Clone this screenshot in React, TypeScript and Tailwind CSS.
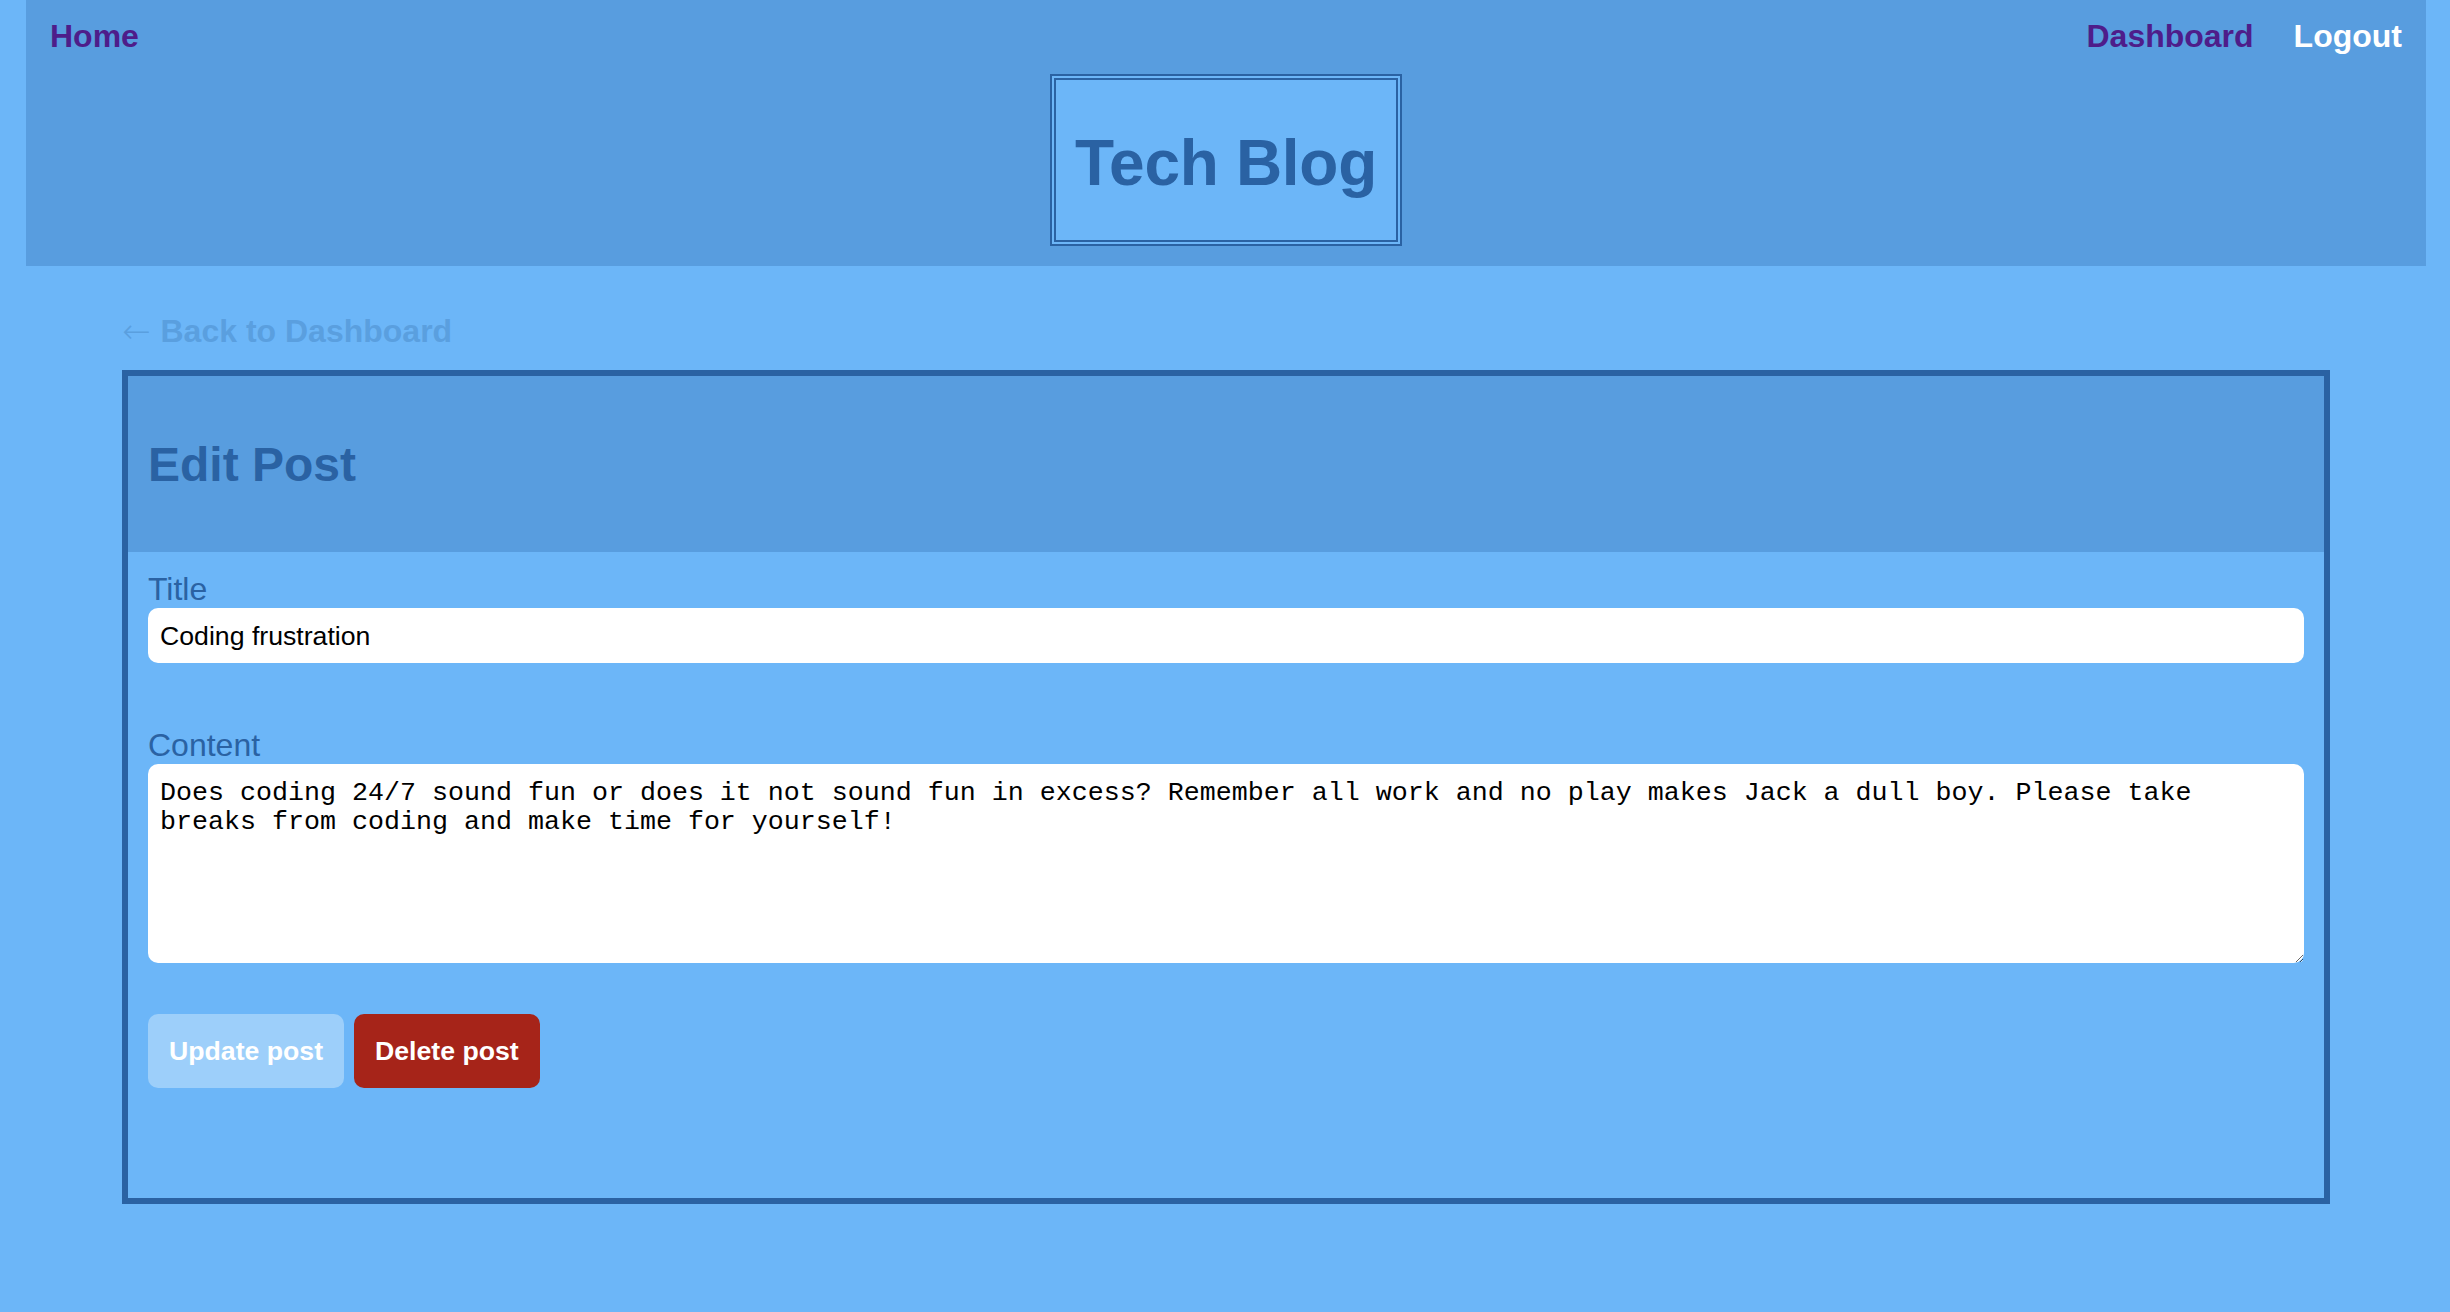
import { useState } from "react";

export default function App() {
  const [title, setTitle] = useState("Coding frustration");
  const [content, setContent] = useState(
    "Does coding 24/7 sound fun or does it not sound fun in excess? Remember all work and no play makes Jack a dull boy. Please take breaks from coding and make time for yourself!"
  );

  return (
    <div className="min-h-screen bg-[#6cb6f8] font-['Liberation_Sans',Arial,sans-serif]">
      <header className="ml-[26px] mr-[24px] bg-[#589ddf] px-[24px] pt-[18px] pb-[20px]">
        <nav className="flex items-center justify-between text-[32px] leading-[37px] font-bold">
          <a href="#" className="text-[#4e1d8a]">
            Home
          </a>
          <div className="flex items-center gap-[40px]">
            <a href="#" className="text-[#4e1d8a]">
              Dashboard
            </a>
            <a href="#" className="text-white">
              Logout
            </a>
          </div>
        </nav>
        <div className="mt-[19px] flex justify-center">
          <h1 className="border-[6px] border-double border-[#2a62a3] bg-[#6cb6f8] px-[19px] pt-[47px] pb-[40px] text-[64px] leading-[73px] font-bold tracking-[-0.3px] text-[#2a62a3]">
            Tech Blog
          </h1>
        </div>
      </header>

      <main className="pl-[122px] pr-[120px] pt-[47px] pb-[60px]">
        <a href="#" className="flex items-center gap-[10px] text-[32px] leading-[37px] font-bold text-[#5a9fdf]">
          <span className="font-['DejaVu_Sans',sans-serif] text-[34px] font-extralight leading-[37px]">←</span>
          <span>Back to Dashboard</span>
        </a>

        <div className="mt-[20px] border-[6px] border-[#2a62a3]">
          {/* Card header */}
          <div className="bg-[#589ddf] px-[20px] pt-[61px] pb-[60px]">
            <h2 className="text-[48px] leading-[55px] font-bold text-[#2a62a3]">Edit Post</h2>
          </div>

          {/* Form */}
          <form className="px-[20px] pt-[19px] pb-[110px]" onSubmit={(e) => e.preventDefault()}>
            <label htmlFor="title" className="block text-[32px] leading-[37px] text-[#2a62a3]">
              Title
            </label>
            <input
              id="title"
              value={title}
              onChange={(e) => setTitle(e.target.value)}
              className="block h-[55px] w-full rounded-[10px] bg-white px-[12px] pt-[2px] text-[26.67px] text-black outline-none"
            />

            <label htmlFor="content" className="mt-[64px] block text-[32px] leading-[37px] text-[#2a62a3]">
              Content
            </label>
            <textarea
              id="content"
              value={content}
              onChange={(e) => setContent(e.target.value)}
              className="block h-[199px] w-full rounded-[10px] bg-white px-[12px] pt-[15px] pb-[12px] font-['Liberation_Mono','Courier_New',monospace] text-[26.67px] leading-[29px] text-black outline-none"
            />

            <div className="mt-[51px] flex gap-[10px]">
              <button
                type="submit"
                className="h-[74px] rounded-[10px] bg-[#9dcffa] px-[21px] text-[26.67px] font-bold text-white"
              >
                Update post
              </button>
              <button
                type="button"
                className="h-[74px] rounded-[10px] bg-[#a62419] px-[21px] text-[26.67px] font-bold text-white"
              >
                Delete post
              </button>
            </div>
          </form>
        </div>
      </main>
    </div>
  );
}
